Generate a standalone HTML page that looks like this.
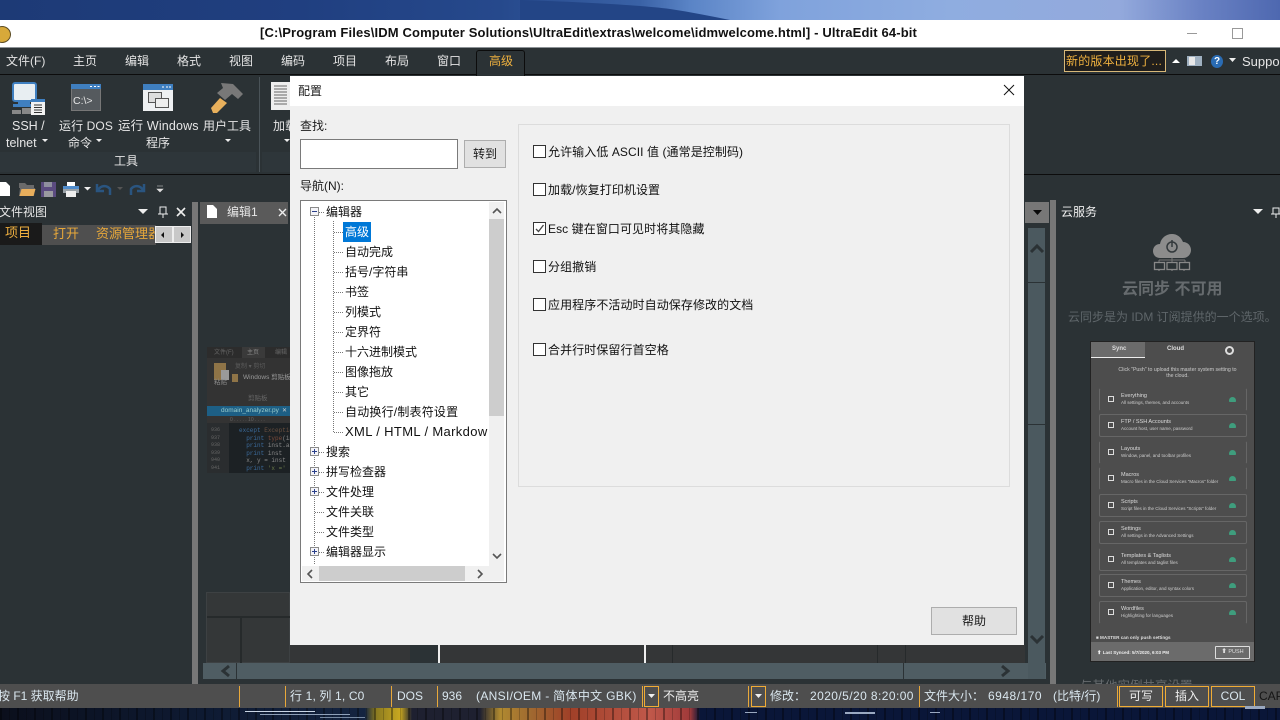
<!DOCTYPE html>
<html lang="zh"><head><meta charset="utf-8"><title>UltraEdit</title>
<style>
html,body{margin:0;padding:0;width:1280px;height:720px;overflow:hidden;background:#2b3235}
body{position:relative;font:12px/16px "Liberation Sans","Noto Sans CJK SC",sans-serif;color:#e6e6e6}
div,span,svg{position:absolute}
.t{white-space:nowrap}
.d{color:#1a1a1a}
.m{top:53px;color:#e4e4e4}
.tr{color:#111;white-space:nowrap}
.cb{left:533px;width:11px;height:11px;border:1px solid #333;background:#fff}
.ck{left:548px;color:#111;white-space:nowrap;letter-spacing:.08px}
.st{color:#d9e6ee;top:688px;white-space:nowrap}
.sep{width:1px;background:#e8a83a;top:686px;height:21px}
.box{border:1px solid #f0ac36;top:686px;height:19px;text-align:center;color:#eee;line-height:19px}
.row{left:1099px;width:146px;height:21px;border:1px solid #666;border-radius:2px}
.rt{left:21px;top:4px;font-size:5.5px;line-height:7px;color:#ddd;white-space:nowrap}
.rs{left:21px;top:10px;font-size:4.5px;line-height:7px;color:#ccc;white-space:nowrap}
.rc{left:8px;top:7px;width:4px;height:4px;border:1px solid #ddd}
.rg{left:129px;top:8px;width:7px;height:5px;background:#3f9d7d;border-radius:4px 4px 1px 1px}
.dotv{width:1px;background:repeating-linear-gradient(to bottom,#777 0,#777 1px,transparent 1px,transparent 2px)}
.doth{height:1px;background:repeating-linear-gradient(to right,#777 0,#777 1px,transparent 1px,transparent 2px)}
.ex{left:310px;width:7px;height:7px;border:1px solid #8a8a8a;background:#f4f4f8}
.ex i{position:absolute;left:1px;top:3px;width:5px;height:1px;background:#2a3f8a}
.ex b{position:absolute;left:3px;top:1px;width:1px;height:5px;background:#2a3f8a}
</style></head><body>

<!-- wallpaper top -->
<div style="left:0;top:0;width:1280px;height:20px;background:linear-gradient(90deg,#1d3a76 0,#203f80 300px,#26498c 500px,#3a62a6 640px,#5a84c6 690px,#7fa2dc 780px,#8fade0 950px,#93a9dc 1120px,#6a82c4 1200px,#4e68b0 1280px)"></div>
<svg style="left:520px;top:0" width="230" height="20"><path d="M0 0C60 2 120 5 150 9C170 12 190 16 210 20H0Z" fill="#234586"/></svg>
<!-- title bar -->
<div style="left:0;top:20px;width:1280px;height:27px;background:#fff;border-bottom:1px solid #8c9296"></div>
<div style="left:-7px;top:26px;width:16px;height:15px;border-radius:50%;background:#d7a93a;border:1px solid #5a4a20"></div>
<div class="t" style="left:260px;top:25px;color:#111;font-weight:bold;font-size:13px;letter-spacing:.14px">[C:\Program Files\IDM Computer Solutions\UltraEdit\extras\welcome\idmwelcome.html] - UltraEdit 64-bit</div>
<div style="left:1187px;top:33px;width:10px;height:1px;background:#999"></div>
<div style="left:1232px;top:28px;width:9px;height:9px;border:1px solid #999"></div>

<!-- menu -->
<div style="left:0;top:48px;width:1280px;height:26px;background:#2b3235"></div>
<div style="left:0;top:74px;width:1280px;height:1px;background:#0c0c0c"></div>
<div class="t m" style="left:6px">文件(F)</div>
<div class="t m" style="left:73px">主页</div>
<div class="t m" style="left:125px">编辑</div>
<div class="t m" style="left:177px">格式</div>
<div class="t m" style="left:229px">视图</div>
<div class="t m" style="left:281px">编码</div>
<div class="t m" style="left:333px">项目</div>
<div class="t m" style="left:385px">布局</div>
<div class="t m" style="left:437px">窗口</div>
<div style="left:476px;top:50px;width:47px;height:25px;background:#2b3235;border:1px solid #0c0c0c;border-bottom:0;border-radius:3px 3px 0 0"></div>
<div class="t m" style="left:489px;color:#eeb03f">高级</div>
<div class="t" style="left:1064px;top:50px;height:20px;padding-left:1px;line-height:21px;border:1px solid #d8b878;background:#201e1c;color:#eeb03f;font-size:12px;letter-spacing:.2px;width:99px">新的版本出现了...</div>
<svg style="left:1171px;top:57px" width="10" height="8"><path d="M1 6L5 2L9 6Z" fill="#fff"/></svg>
<div style="left:1187px;top:56px;width:15px;height:10px;background:#9fb0c0"></div>
<div style="left:1189px;top:57px;width:6px;height:8px;background:#e8e8e8"></div>
<div style="left:1211px;top:55px;width:12px;height:13px;border-radius:50%;background:#2a6cb4;color:#fff;font:bold 10px/13px 'Liberation Sans';text-align:center">?</div>
<svg style="left:1228px;top:57px" width="9" height="6"><path d="M1 1H8L4.500 5Z" fill="#eee"/></svg>
<div class="t" style="left:1242px;top:54px;font-size:13px;color:#e6e6e6">Suppo</div>

<!-- ribbon -->
<div style="left:0;top:152px;width:256px;height:20px;background:#2e363a"></div>
<div style="left:262px;top:152px;width:30px;height:20px;background:#2e363a"></div>
<div style="left:259px;top:77px;width:1px;height:95px;background:#4a5358"></div>
<div style="left:0;top:174px;width:1280px;height:1px;background:#0c0c0c"></div>
<!-- SSH icon -->
<svg style="left:12px;top:82px" width="34" height="34"><rect x="1" y="1" width="23" height="18" rx="2" fill="#e8eef2" stroke="#3f7fc0" stroke-width="2"/><rect x="6" y="20" width="12" height="2" fill="#3f7fc0"/><rect x="1" y="22" width="22" height="3" fill="#3f7fc0"/><rect x="0" y="28" width="9" height="4" fill="#888"/><rect x="10" y="26" width="9" height="6" fill="#888"/><rect x="19" y="17" width="14" height="16" fill="#f2f2f2"/><rect x="19" y="17" width="14" height="3" fill="#3f7fc0"/><path d="M22 23h8M22 25.500h8M22 28h8M22 30.500h8" stroke="#333"/></svg>
<!-- DOS -->
<svg style="left:71px;top:84px" width="30" height="28"><rect x=".5" y=".5" width="29" height="26" fill="#555a5e" stroke="#777"/><rect width="30" height="5" fill="#3f7fc0"/><path d="M19 2.500h2M23 2.500h2M26.500 2.500h2" stroke="#fff"/><text x="2" y="20" font-family="Liberation Sans" font-size="10.5" fill="#e6e6e6">C:\&gt;</text></svg>
<!-- Windows -->
<svg style="left:143px;top:84px" width="30" height="28"><rect width="30" height="27" fill="#eef0f2"/><rect width="30" height="6" fill="#3f7fc0"/><path d="M19 3h2M23 3h2M26 3h2" stroke="#fff"/><rect x="5.500" y="8.500" width="13" height="10" fill="#ddd" stroke="#555"/><rect x="12.500" y="14.500" width="13" height="9" fill="#eee" stroke="#555"/></svg>
<!-- hammer -->
<svg style="left:210px;top:80px" width="36" height="36"><path d="M1 28L10 18L17 23L7 33H3Z" fill="#e8b05c"/><path d="M11 3L23 4L33 14L28 19L22 14L15 20L7 13L13 8Z" fill="#787878"/></svg>
<!-- doc -->
<svg style="left:271px;top:82px" width="19" height="28"><rect width="19" height="28" fill="#eee"/><path d="M3 4h13M3 7h13M3 10h13M3 13h13M3 16h13M3 19h13M3 22h13" stroke="#666"/></svg>
<div class="t" style="left:12px;top:118px;font-size:12.5px">SSH /</div>
<div class="t" style="left:6px;top:135px;font-size:12.5px">telnet</div>
<div class="t" style="left:59px;top:118px;font-size:12px;letter-spacing:.1px">运行 DOS</div>
<div class="t" style="left:68px;top:135px">命令</div>
<div class="t" style="left:118px;top:118px;font-size:12.5px;letter-spacing:.15px">运行 Windows</div>
<div class="t" style="left:146px;top:135px">程序</div>
<div class="t" style="left:203px;top:118px">用户工具</div>
<div class="t" style="left:273px;top:118px">加载</div>
<svg style="left:0;top:136px;width:300px;height:10px"><path d="M42 3h6l-3 3zM96 3h6l-3 3zM225 3h6l-3 3zM284 3h6l-3 3z" fill="#eee"/></svg>
<div class="t" style="left:114px;top:153px">工具</div>

<!-- QAT -->
<svg style="left:0;top:178px;width:170px;height:22px">
<path d="M0 4h6l4 4v10H0z" fill="#fff"/>
<path d="M19 5h6l2 2h7v3H19zM19 18l1-8h15l-1 8z" fill="#6a6a6a"/><path d="M19.500 18l2-7h14l-2 7z" fill="#e8ae5c"/>
<rect x="41" y="4" width="15" height="15" fill="#5b4b80"/><rect x="44" y="4" width="8" height="5" fill="#8f8f9f"/><rect x="44" y="13" width="9" height="6" fill="#9a9aa0"/>
<rect x="67" y="4" width="8" height="5" fill="#fff"/><rect x="63" y="8" width="16" height="7" fill="#9aa2a8"/><rect x="63" y="8" width="16" height="3" fill="#4f8ccc"/><rect x="66" y="13" width="10" height="6" fill="#eee"/>
<path d="M84 9h7l-3.500 3.500z" fill="#eee"/>
<path d="M97 6v7h7M98 12c3-5 9-5 12-1l0 6" fill="none" stroke="#2a5580" stroke-width="2.500"/>
<path d="M117 9h6l-3 3z" fill="#555"/>
<path d="M144 6v7h-7M143 12c-3-5-9-5-12-1l0 6" fill="none" stroke="#2a5580" stroke-width="2.500"/>
<path d="M157 8h6M157 11h6l-3 3z" fill="#ddd" stroke="#ddd" stroke-width=".6"/>
</svg>

<!-- left panel -->
<div style="left:0;top:202px;width:192px;height:482px;background:#2b3235"></div>
<div style="left:192px;top:202px;width:6px;height:482px;background:#777"></div>
<div class="t" style="left:-1px;top:204px">文件视图</div>
<svg style="left:135px;top:204px;width:58px;height:16px"><path d="M3 5h10l-5 5z" fill="#eee"/><path d="M25 3h6v7h-6zM28 10v4M23 10h10" fill="none" stroke="#eee"/><path d="M42 4l8 8M50 4l-8 8" stroke="#eee" stroke-width="1.600"/></svg>
<div style="left:0;top:223px;width:42px;height:22px;background:#1a1a1a"></div>
<div style="left:42px;top:225px;width:48px;height:20px;background:#4f4f4f"></div>
<div style="left:90px;top:225px;width:66px;height:20px;background:#4f4f4f"></div>
<div class="t" style="left:5px;top:225px;color:#f0b040;font-size:13px">项目</div>
<div class="t" style="left:53px;top:226px;color:#e8a83a;font-size:13px">打开</div>
<div class="t" style="left:96px;top:226px;color:#e8a83a;font-size:13px;width:62px;overflow:hidden">资源管理器</div>
<div style="left:155px;top:226px;width:18px;height:17px;background:#c8c8c8;border:1px solid #eee;box-sizing:border-box"></div>
<div style="left:173px;top:226px;width:18px;height:17px;background:#c8c8c8;border:1px solid #eee;box-sizing:border-box"></div>
<svg style="left:155px;top:226px;width:36px;height:17px"><path d="M9 6v6l-3-3zM26 6v6l3-3z" fill="#111"/></svg>

<!-- editor tab -->
<div style="left:200px;top:202px;width:88px;height:22px;background:#5a5a5a"></div>
<svg style="left:207px;top:205px" width="11" height="14"><path d="M0 0h6l4 4v9H0z" fill="#fff"/></svg>
<div class="t" style="left:227px;top:204px;color:#e6e6e6">编辑1</div>
<svg style="left:278px;top:208px" width="10" height="10"><path d="M1 1l7 7M8 1l-7 7" stroke="#eee" stroke-width="1.400"/></svg>

<!-- thumbnail -->
<div style="left:207px;top:347px;width:83px;height:126px;background:#333;overflow:hidden">
 <div style="left:0;top:0;width:83px;height:11px;background:#2c2c2c"></div>
 <div class="t" style="left:7px;top:0;font-size:6px;line-height:12px;color:#666">文件(F)</div>
 <div style="left:35px;top:0;width:23px;height:11px;background:#3a3a3a"></div>
 <div class="t" style="left:40px;top:0;font-size:6px;line-height:12px;color:#888">主页</div>
 <div class="t" style="left:68px;top:0;font-size:6px;line-height:12px;color:#666">编辑</div>
 <div style="left:7px;top:16px;width:12px;height:17px;background:#8f7447"></div>
 <div style="left:14px;top:23px;width:8px;height:10px;background:#9a9a9a"></div>
 <div class="t" style="left:28px;top:16px;font-size:6px;line-height:8px;color:#5c5c5c">复制 ▾ 剪切</div>
 <div style="left:25px;top:27px;width:6px;height:8px;background:#8f7447"></div>
 <div class="t" style="left:36px;top:27px;font-size:6.5px;line-height:8px;color:#999">Windows 剪贴板</div>
 <div class="t" style="left:7px;top:32px;font-size:6.5px;line-height:8px;color:#888">粘贴</div>
 <div class="t" style="left:41px;top:48px;font-size:6.5px;line-height:8px;color:#666">剪贴板</div>
 <div style="left:0;top:59px;width:83px;height:10px;background:#1d5f85"></div>
 <div class="t" style="left:14px;top:59px;font-size:6.5px;line-height:10px;color:#9cc">domain_analyzer.py</div>
 <div class="t" style="left:75px;top:59px;font-size:6px;line-height:10px;color:#ccc">✕</div>
 <div class="t" style="left:23px;top:70px;font-size:5px;line-height:6px;color:#666">0 . . . . . 10 . . . .</div>
 <div style="left:0;top:76px;width:22px;height:50px;background:#2a2d2f"></div>
 <div style="left:22px;top:76px;width:61px;height:50px;background:#1c2124"></div>
 <div class="t" style="left:4px;top:80px;font:5px/7.6px 'Liberation Mono';color:#666;white-space:pre">936
937
938
939
940
941</div>
 <div class="t" style="left:32px;top:80px;font:6px/7.6px 'Liberation Mono';color:#3b6a9a;white-space:pre">except <span style="position:static;color:#6a5040">Exception</span>
  print <span style="position:static;color:#7a4a3a">type</span><span style="position:static;color:#888">(in</span>
  print <span style="position:static;color:#888">inst.a</span>
  print <span style="position:static;color:#888">inst</span>
  <span style="position:static;color:#888">x, y = inst</span>
  print <span style="position:static;color:#6a7a4a">'x ='</span></div>
</div>

<!-- lower editor -->
<div style="left:206px;top:592px;width:84px;height:71px;background:#343738;border:1px solid #3d4143;box-sizing:border-box"></div>
<div style="left:207px;top:616px;width:83px;height:2px;background:#262a2b"></div>
<div style="left:240px;top:618px;width:2px;height:45px;background:#262a2b"></div>
<div style="left:290px;top:645px;width:735px;height:18px;background:#343637"></div>
<div style="left:410px;top:645px;width:28px;height:18px;background:#2b3235"></div>
<div style="left:438px;top:645px;width:2px;height:18px;background:#eee"></div>
<div style="left:644px;top:645px;width:2px;height:18px;background:#eee"></div>
<div style="left:672px;top:645px;width:1px;height:18px;background:#262a2b"></div>
<div style="left:877px;top:645px;width:1px;height:18px;background:#262a2b"></div>
<div style="left:905px;top:645px;width:1px;height:18px;background:#262a2b"></div>
<div style="left:203px;top:663px;width:33px;height:16px;background:#4f5d63"></div>
<div style="left:237px;top:663px;width:666px;height:16px;background:#4f5d63"></div>
<div style="left:904px;top:663px;width:142px;height:16px;background:#4f5d63"></div>
<svg style="left:219px;top:664px;width:800px;height:14px"><path d="M10 2L4 7L10 12" fill="none" stroke="#2b3235" stroke-width="3"/><path d="M783 2L789 7L783 12" fill="none" stroke="#2b3235" stroke-width="3"/></svg>

<!-- editor right scroll -->
<div style="left:1025px;top:202px;width:24px;height:21px;background:#777"></div>
<svg style="left:1025px;top:202px" width="24" height="21"><path d="M8 8h9l-4.500 5z" fill="#0a0a0a"/></svg>
<div style="left:1028px;top:228px;width:17px;height:451px;background:#4b595f"></div>
<div style="left:1028px;top:282px;width:17px;height:1px;background:#2b3235"></div>
<div style="left:1028px;top:424px;width:17px;height:1px;background:#2b3235"></div>
<svg style="left:1028px;top:240px;width:18px;height:412px"><path d="M3 12L9 6L15 12" fill="none" stroke="#2b3235" stroke-width="3"/><path d="M3 396L9 402L15 396" fill="none" stroke="#2b3235" stroke-width="3"/></svg>
<div style="left:1050px;top:200px;width:6px;height:484px;background:#777"></div>

<!-- right panel -->
<div class="t" style="left:1061px;top:204px;color:#eee">云服务</div>
<svg style="left:1252px;top:206px;width:28px;height:14px"><path d="M1 3h10l-5 5z" fill="#eee"/><path d="M21 2h6v6h-6zM24 8v4M19 8h10" fill="none" stroke="#eee"/></svg>
<svg style="left:1153px;top:233px" width="40" height="40">
<path d="M7 25C2 25 0 21 0 18c0-4 3-7 7-7 1-6 6-10 12-10 5 0 9 3 11 8 5 0 8 4 8 8 0 4-3 8-8 8z" fill="#8c8c8c"/>
<circle cx="19" cy="14" r="5" fill="none" stroke="#33393c" stroke-width="1.500"/><path d="M19 7v7" stroke="#33393c" stroke-width="1.500"/>
<path d="M19 25v4M6 27h26M6 27v2M32 27v2" stroke="#777" fill="none"/>
<rect x="1.500" y="29.500" width="10" height="7" fill="none" stroke="#888" stroke-width="1.300"/><rect x="14" y="29.500" width="10" height="7" fill="none" stroke="#888" stroke-width="1.300"/><rect x="26.500" y="29.500" width="10" height="7" fill="none" stroke="#888" stroke-width="1.300"/>
<path d="M6 37v1M19 37v1M31 37v1" stroke="#888"/>
</svg>
<div class="t" style="left:1122px;top:281px;font-size:16px;line-height:18px;font-weight:bold;color:#666b6e">云同步 不可用</div>
<div class="t" style="left:1068px;top:309px;font-size:12px;color:#5f666a">云同步是为 IDM 订阅提供的一个选项。</div>
<div class="t" style="left:1080px;top:678px;font-size:12.5px;color:#666b6e">与其他实例共享设置</div>

<!-- card -->
<div style="left:1090px;top:341px;width:165px;height:321px;background:#4d4d4d;border:1px solid #222;box-sizing:border-box"></div>
<div style="left:1091px;top:342px;width:54px;height:15px;background:#6b6b6b;border-bottom:1px solid #eee"></div>
<div class="t" style="left:1112px;top:345px;font-size:6px;line-height:9px;font-weight:bold;color:#ddd">Sync</div>
<div class="t" style="left:1167px;top:345px;font-size:6px;line-height:9px;font-weight:bold;color:#ddd">Cloud</div>
<div style="left:1225px;top:346px;width:5px;height:5px;border-radius:50%;border:2px solid #ddd"></div>
<div style="left:1115px;top:367px;width:125px;text-align:center;font-size:5.2px;line-height:6px;color:#ccc">Click "Push" to upload this master system setting to the cloud.</div>
<div class="row" style="top:388px;border-top-color:#4d4d4d;border-bottom-color:#4d4d4d"><div class="rc"></div><div class="rt">Everything</div><div class="rs">All settings, themes, and accounts</div><div class="rg"></div></div>
<div class="row" style="top:414px"><div class="rc"></div><div class="rt">FTP / SSH Accounts</div><div class="rs">Account host, user name, password</div><div class="rg"></div></div>
<div class="row" style="top:441px;border-top-color:#4d4d4d;border-bottom-color:#4d4d4d"><div class="rc"></div><div class="rt">Layouts</div><div class="rs">Window, panel, and toolbar profiles</div><div class="rg"></div></div>
<div class="row" style="top:467px;border-top-color:#4d4d4d;border-bottom-color:#4d4d4d"><div class="rc"></div><div class="rt">Macros</div><div class="rs">Macro files in the Cloud Services "Macros" folder</div><div class="rg"></div></div>
<div class="row" style="top:494px"><div class="rc"></div><div class="rt">Scripts</div><div class="rs">Script files in the Cloud Services "Scripts" folder</div><div class="rg"></div></div>
<div class="row" style="top:521px"><div class="rc"></div><div class="rt">Settings</div><div class="rs">All settings in the Advanced Settings</div><div class="rg"></div></div>
<div class="row" style="top:548px;border-top-color:#4d4d4d"><div class="rc"></div><div class="rt">Templates &amp; Taglists</div><div class="rs">All templates and taglist files</div><div class="rg"></div></div>
<div class="row" style="top:574px"><div class="rc"></div><div class="rt">Themes</div><div class="rs">Application, editor, and syntax colors</div><div class="rg"></div></div>
<div class="row" style="top:601px;border-bottom-color:#4d4d4d"><div class="rc"></div><div class="rt">Wordfiles</div><div class="rs">Highlighting for languages</div><div class="rg"></div></div>
<div class="t" style="left:1096px;top:634px;font-size:4.6px;line-height:7px;color:#ddd;font-weight:bold">■ MASTER can only push settings</div>
<div style="left:1091px;top:642px;width:163px;height:19px;background:#6b6b6b"></div>
<div class="t" style="left:1097px;top:649px;font-size:4.5px;line-height:7px;color:#eee;font-weight:bold">⬆ Last Synced: 5/7/2020, 6:03 PM</div>
<div style="left:1215px;top:646px;width:33px;height:11px;border:1px solid #ddd;border-radius:1px;font-size:5.5px;line-height:11px;text-align:center;color:#ddd">⬆ PUSH</div>

<!-- status bar -->
<div style="left:0;top:684px;width:1280px;height:24px;background:#4e4e4e"></div>
<div class="st" style="left:-2px">按 F1 获取帮助</div>
<div class="sep" style="left:239px"></div>
<div class="sep" style="left:285px"></div>
<div class="st" style="left:290px;letter-spacing:.15px">行 1, 列 1, C0</div>
<div class="sep" style="left:391px"></div>
<div class="st" style="left:397px">DOS</div>
<div class="sep" style="left:437px"></div>
<div class="st" style="left:442px">936</div>
<div class="st" style="left:476px;letter-spacing:.32px">(ANSI/OEM - 简体中文 GBK)</div>
<div class="sep" style="left:642px"></div>
<div class="box" style="left:644px;width:13px"></div>
<svg style="left:648px;top:694px" width="8" height="5"><path d="M0 0h7l-3.500 4z" fill="#eee"/></svg>
<div class="st" style="left:663px;color:#eee">不高亮</div>
<div class="sep" style="left:748px"></div>
<div class="box" style="left:751px;width:13px"></div>
<svg style="left:755px;top:694px" width="8" height="5"><path d="M0 0h7l-3.500 4z" fill="#eee"/></svg>
<div class="st" style="left:770px">修改：</div>
<div class="st" style="left:810px;letter-spacing:.42px">2020/5/20 8:20:00</div>
<div class="sep" style="left:919px"></div>
<div class="st" style="left:924px">文件大小：</div>
<div class="st" style="left:988px;letter-spacing:.5px">6948/170</div>
<div class="st" style="left:1053px">(比特/行)</div>
<div class="sep" style="left:1117px"></div>
<div class="box" style="left:1119px;width:42px">可写</div>
<div class="box" style="left:1165px;width:42px">插入</div>
<div class="box" style="left:1211px;width:42px;color:#d9e6ee">COL</div>
<div class="st" style="left:1259px;color:#151515">CAP</div>

<!-- wallpaper bottom -->
<div style="left:0;top:708px;width:1280px;height:12px;background:linear-gradient(90deg,#0b0f1c 0,#0e1a32 200px,#142440 365px,#8a7a20 376px,#c9a820 400px,#1e2030 412px,#1e2030 480px,#b08a30 500px,#a06a30 530px,#a04028 570px,#c0584a 650px,#a03a3a 690px,#0a1638 700px,#0a1638 1280px)"></div>
<div style="left:0;top:708px;width:1280px;height:12px;background:repeating-linear-gradient(90deg,rgba(0,0,0,.35) 0,rgba(0,0,0,.35) 2px,transparent 2px,transparent 9px,rgba(0,0,0,.2) 9px,rgba(0,0,0,.2) 10px,transparent 10px,transparent 17px)"></div>
<div style="left:245px;top:711px;width:70px;height:1px;background:#c8d4e4"></div>
<div style="left:260px;top:714px;width:90px;height:1px;background:#8fa0b8"></div>
<div style="left:320px;top:717px;width:45px;height:1px;background:#7688a0"></div>
<div style="left:745px;top:712px;width:12px;height:1px;background:#9aa8c0"></div>
<div style="left:845px;top:712px;width:30px;height:2px;background:#9aa8c0"></div>
<div style="left:930px;top:712px;width:10px;height:1px;background:#9aa8c0"></div>
<div style="left:1245px;top:706px;width:20px;height:3px;background:#9aa8c0"></div>

<!-- dialog -->
<div style="left:290px;top:76px;width:734px;height:569px;background:#f0f0f0"></div>
<div style="left:290px;top:76px;width:734px;height:30px;background:#fff"></div>
<div class="t d" style="left:298px;top:83px">配置</div>
<svg style="left:1003px;top:84px" width="12" height="12"><path d="M1 1l10 10M11 1L1 11" stroke="#111" stroke-width="1"/></svg>
<div class="t d" style="left:300px;top:118px">查找:</div>
<div style="left:300px;top:139px;width:156px;height:28px;background:#fff;border:1px solid #7a7a7a"></div>
<div class="t d" style="left:464px;top:140px;width:40px;height:26px;background:#e1e1e1;border:1px solid #adadad;text-align:center;line-height:26px">转到</div>
<div class="t d" style="left:300px;top:178px">导航(N):</div>

<!-- tree -->
<div style="left:300px;top:200px;width:205px;height:381px;background:#fff;border:1px solid #7a7a7a"></div>
<div style="left:489px;top:202px;width:15px;height:364px;background:#f0f0f0"></div>
<div style="left:489px;top:219px;width:15px;height:197px;background:#cdcdcd"></div>
<div style="left:302px;top:566px;width:202px;height:15px;background:#f0f0f0"></div>
<div style="left:319px;top:566px;width:146px;height:15px;background:#cdcdcd"></div>
<svg style="left:302px;top:202px;width:202px;height:379px"><path d="M191 11l4-4 4 4M191 352l4 4 4-4" fill="none" stroke="#555" stroke-width="1.600"/><path d="M10 368l-4 4 4 4M176 368l4 4-4 4" fill="none" stroke="#555" stroke-width="1.600"/></svg>
<div class="dotv" style="left:314px;top:217px;height:348px"></div>
<div class="dotv" style="left:333px;top:221px;height:211px"></div>
<div class="doth" style="left:334px;top:232px;width:9px"></div>
<div class="doth" style="left:334px;top:252px;width:9px"></div>
<div class="doth" style="left:334px;top:272px;width:9px"></div>
<div class="doth" style="left:334px;top:292px;width:9px"></div>
<div class="doth" style="left:334px;top:312px;width:9px"></div>
<div class="doth" style="left:334px;top:332px;width:9px"></div>
<div class="doth" style="left:334px;top:352px;width:9px"></div>
<div class="doth" style="left:334px;top:372px;width:9px"></div>
<div class="doth" style="left:334px;top:392px;width:9px"></div>
<div class="doth" style="left:334px;top:412px;width:9px"></div>
<div class="doth" style="left:334px;top:432px;width:9px"></div>
<div class="doth" style="left:319px;top:212px;width:5px"></div>
<div class="doth" style="left:319px;top:452px;width:5px"></div>
<div class="doth" style="left:319px;top:472px;width:5px"></div>
<div class="doth" style="left:319px;top:492px;width:5px"></div>
<div class="doth" style="left:315px;top:512px;width:9px"></div>
<div class="doth" style="left:315px;top:532px;width:9px"></div>
<div class="doth" style="left:319px;top:552px;width:5px"></div>
<div class="ex" style="top:207px"><i></i></div>
<div class="ex" style="top:447px"><i></i><b></b></div>
<div class="ex" style="top:467px"><i></i><b></b></div>
<div class="ex" style="top:487px"><i></i><b></b></div>
<div class="ex" style="top:547px"><i></i><b></b></div>
<div style="left:343px;top:222px;width:28px;height:20px;background:#0078d7"></div>
<div class="tr" style="left:326px;top:204px">编辑器</div>
<div class="tr" style="left:345px;top:224px;color:#fff">高级</div>
<div class="tr" style="left:345px;top:244px">自动完成</div>
<div class="tr" style="left:345px;top:264px">括号/字符串</div>
<div class="tr" style="left:345px;top:284px">书签</div>
<div class="tr" style="left:345px;top:304px">列模式</div>
<div class="tr" style="left:345px;top:324px">定界符</div>
<div class="tr" style="left:345px;top:344px">十六进制模式</div>
<div class="tr" style="left:345px;top:364px">图像拖放</div>
<div class="tr" style="left:345px;top:384px">其它</div>
<div class="tr" style="left:345px;top:404px;letter-spacing:.2px">自动换行/制表符设置</div>
<div class="tr" style="left:345px;top:424px;width:143px;overflow:hidden;font-size:13px;letter-spacing:.35px">XML / HTML / Markdown</div>
<div class="tr" style="left:326px;top:444px">搜索</div>
<div class="tr" style="left:326px;top:464px">拼写检查器</div>
<div class="tr" style="left:326px;top:484px">文件处理</div>
<div class="tr" style="left:326px;top:504px">文件关联</div>
<div class="tr" style="left:326px;top:524px">文件类型</div>
<div class="tr" style="left:326px;top:544px">编辑器显示</div>

<!-- right group -->
<div style="left:518px;top:124px;width:490px;height:361px;border:1px solid #dcdcdc"></div>
<div class="cb" style="top:145px"></div><div class="ck" style="top:144px">允许输入低 ASCII 值 (通常是控制码)</div>
<div class="cb" style="top:183px"></div><div class="ck" style="top:182px">加载/恢复打印机设置</div>
<div class="cb" style="top:222px"></div><div class="ck" style="top:221px">Esc 键在窗口可见时将其隐藏</div>
<svg style="left:533px;top:222px" width="13" height="13"><path d="M3 7l2.500 2.500L10.500 3" fill="none" stroke="#444" stroke-width="1.300"/></svg>
<div class="cb" style="top:260px"></div><div class="ck" style="top:259px">分组撤销</div>
<div class="cb" style="top:298px"></div><div class="ck" style="top:297px">应用程序不活动时自动保存修改的文档</div>
<div class="cb" style="top:343px"></div><div class="ck" style="top:342px">合并行时保留行首空格</div>
<div class="t d" style="left:931px;top:607px;width:84px;height:26px;background:#e1e1e1;border:1px solid #adadad;text-align:center;line-height:26px">帮助</div>
</body></html>
